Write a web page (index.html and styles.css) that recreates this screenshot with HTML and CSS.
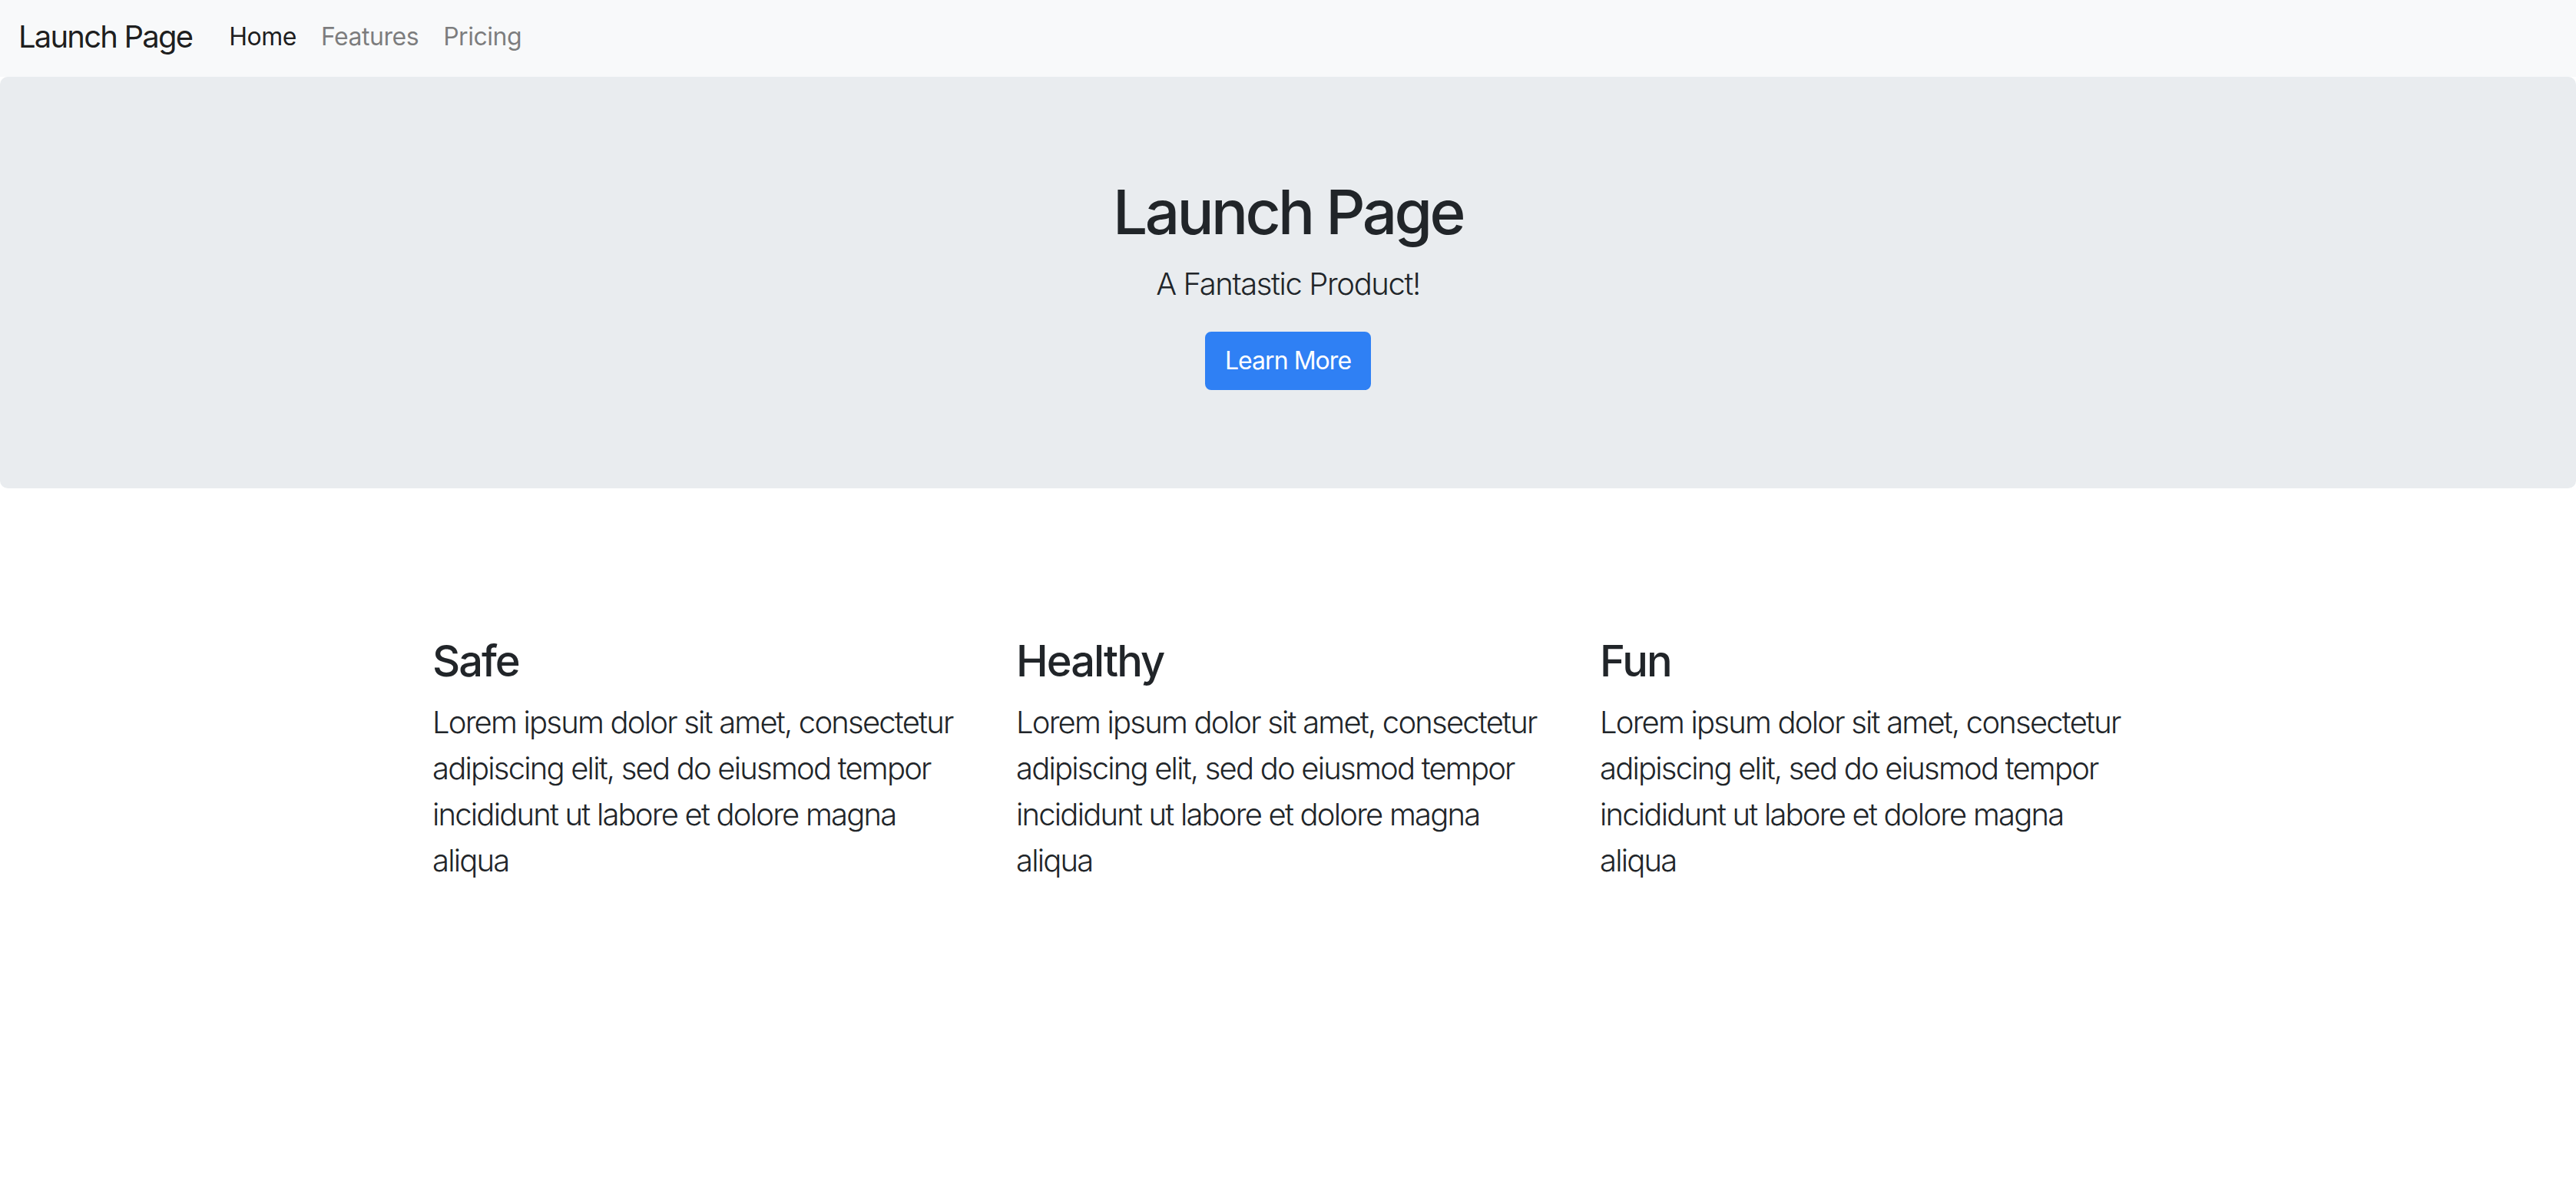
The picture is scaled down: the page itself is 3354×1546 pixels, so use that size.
FILE: index.html
```html
<!DOCTYPE html>
<html lang="en">
<head>
<meta charset="utf-8">
<title>Launch Page</title>
<link rel="stylesheet" href="styles.css">
</head>
<body>
<nav class="navbar">
  <a class="brand" href="#">Launch Page</a>
  <ul class="nav">
    <li><a class="nav-link active" href="#">Home</a></li>
    <li><a class="nav-link" href="#">Features</a></li>
    <li><a class="nav-link" href="#">Pricing</a></li>
  </ul>
</nav>
<header class="jumbotron">
  <h1 class="title">Launch Page</h1>
  <p class="lead">A Fantastic Product!</p>
  <a class="btn" href="#">Learn More</a>
</header>
<main class="container">
  <div class="row">
    <section class="col">
      <h3 class="col-title">Safe</h3>
      <p class="col-text">Lorem ipsum dolor sit amet, consectetur adipiscing elit, sed do eiusmod tempor incididunt ut labore et dolore magna aliqua</p>
    </section>
    <section class="col">
      <h3 class="col-title">Healthy</h3>
      <p class="col-text">Lorem ipsum dolor sit amet, consectetur adipiscing elit, sed do eiusmod tempor incididunt ut labore et dolore magna aliqua</p>
    </section>
    <section class="col">
      <h3 class="col-title">Fun</h3>
      <p class="col-text">Lorem ipsum dolor sit amet, consectetur adipiscing elit, sed do eiusmod tempor incididunt ut labore et dolore magna aliqua</p>
    </section>
  </div>
</main>
</body>
</html>
```

FILE: styles.css
```css
* { box-sizing: border-box; }
html, body { margin: 0; padding: 0; }
body {
  font-family: Inter, "Noto Sans", "Liberation Sans", sans-serif;
  font-size: 32px;
  line-height: 1.5;
  color: #212529;
  background: #fff;
}
a { text-decoration: none; }

.navbar {
  display: flex;
  align-items: center;
  height: 100px;
  padding: 0 24px 4px;
  background: #f8f9fa;
}
.brand {
  font-size: 40px;
  letter-spacing: -0.045em;
  color: rgba(0,0,0,0.9);
  margin-right: 32px;
  line-height: 60px;
}
.nav {
  display: flex;
  list-style: none;
  margin: 0;
  padding: 0;
}
.nav-link {
  display: block;
  padding: 0 16px;
  font-size: 32px;
  letter-spacing: -0.015em;
  color: rgba(0,0,0,0.5);
}
.nav-link.active { color: rgba(0,0,0,0.9); }

.jumbotron {
  background: #e9ecef;
  padding: 128px 64px;
  margin-bottom: 64px;
  border-radius: 10px;
  text-align: center;
}
.title {
  margin: 0 0 16px;
  font-size: 80px;
  line-height: 1.2;
  font-weight: 500;
  letter-spacing: -0.045em;
}
.lead {
  margin: 0 0 32px;
  font-size: 40px;
  font-weight: 300;
  line-height: 60px;
  letter-spacing: -0.035em;
}
.btn {
  display: inline-block;
  padding: 12px 24px;
  border: 2px solid #2f80f4;
  border-radius: 8px;
  background: #2f80f4;
  color: #fff;
  font-size: 32px;
  line-height: 48px;
  letter-spacing: -0.03em;
}

.container {
  width: 2280px;
  margin: 0 auto;
  padding: 128px 34px 0 26px;
}
.row {
  display: grid;
  grid-template-columns: repeat(3, 1fr);
  column-gap: 60px;
}
.col-title {
  margin: 0 0 16px;
  font-size: 56px;
  line-height: 1.2;
  font-weight: 500;
  letter-spacing: -0.035em;
}
.col-text {
  margin: 0;
  font-size: 40px;
  font-weight: 300;
  line-height: 60px;
  letter-spacing: -0.045em;
}
```
